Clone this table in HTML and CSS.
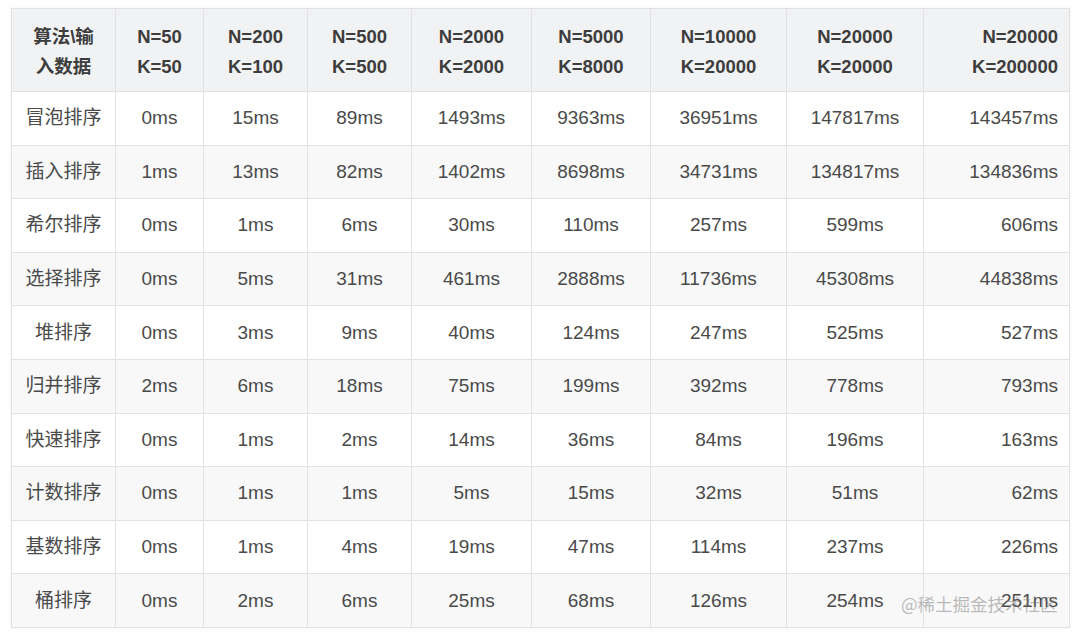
FILE: index.html
```html
<!DOCTYPE html>
<html lang="zh">
<head>
<meta charset="utf-8">
<link rel="stylesheet" href="styles.css">
</head>
<body>
<div class="wrap">
<table class="grid">
<colgroup>
<col class="c0"><col class="c1"><col class="c2"><col class="c3"><col class="c4"><col class="c5"><col class="c6"><col class="c7"><col class="c8">
</colgroup>
<thead>
<tr>
<th>算法\输<br>入数据</th>
<th>N=50<br>K=50</th>
<th>N=200<br>K=100</th>
<th>N=500<br>K=500</th>
<th>N=2000<br>K=2000</th>
<th>N=5000<br>K=8000</th>
<th>N=10000<br>K=20000</th>
<th>N=20000<br>K=20000</th>
<th class="r">N=20000<br>K=200000</th>
</tr>
</thead>
<tbody>
<tr><td>冒泡排序</td><td>0ms</td><td>15ms</td><td>89ms</td><td>1493ms</td><td>9363ms</td><td>36951ms</td><td>147817ms</td><td class="r">143457ms</td></tr>
<tr><td>插入排序</td><td>1ms</td><td>13ms</td><td>82ms</td><td>1402ms</td><td>8698ms</td><td>34731ms</td><td>134817ms</td><td class="r">134836ms</td></tr>
<tr><td>希尔排序</td><td>0ms</td><td>1ms</td><td>6ms</td><td>30ms</td><td>110ms</td><td>257ms</td><td>599ms</td><td class="r">606ms</td></tr>
<tr><td>选择排序</td><td>0ms</td><td>5ms</td><td>31ms</td><td>461ms</td><td>2888ms</td><td>11736ms</td><td>45308ms</td><td class="r">44838ms</td></tr>
<tr><td>堆排序</td><td>0ms</td><td>3ms</td><td>9ms</td><td>40ms</td><td>124ms</td><td>247ms</td><td>525ms</td><td class="r">527ms</td></tr>
<tr><td>归并排序</td><td>2ms</td><td>6ms</td><td>18ms</td><td>75ms</td><td>199ms</td><td>392ms</td><td>778ms</td><td class="r">793ms</td></tr>
<tr><td>快速排序</td><td>0ms</td><td>1ms</td><td>2ms</td><td>14ms</td><td>36ms</td><td>84ms</td><td>196ms</td><td class="r">163ms</td></tr>
<tr><td>计数排序</td><td>0ms</td><td>1ms</td><td>1ms</td><td>5ms</td><td>15ms</td><td>32ms</td><td>51ms</td><td class="r">62ms</td></tr>
<tr><td>基数排序</td><td>0ms</td><td>1ms</td><td>4ms</td><td>19ms</td><td>47ms</td><td>114ms</td><td>237ms</td><td class="r">226ms</td></tr>
<tr><td>桶排序</td><td>0ms</td><td>2ms</td><td>6ms</td><td>25ms</td><td>68ms</td><td>126ms</td><td>254ms</td><td class="r">251ms</td></tr>
</tbody>
</table>
<div class="mark">@稀土掘金技术社区</div>
</div>
</body>
</html>
```
FILE: styles.css
```css
html, body {
  margin: 0;
  padding: 0;
  background: #ffffff;
}
.wrap {
  position: relative;
  width: 1080px;
  height: 635px;
  padding: 8px 0 0 11px;
  box-sizing: border-box;
}
.grid {
  border-collapse: collapse;
  table-layout: fixed;
  width: 1058px;
  font-family: "Liberation Sans", "Noto Sans CJK SC", sans-serif;
  font-size: 19px;
  color: #4a4a4a;
  box-shadow: 0 0 3px rgba(0,0,0,0.06);
}
.c0 { width: 104px; }
.c1 { width: 88px; }
.c2 { width: 104px; }
.c3 { width: 104px; }
.c4 { width: 120px; }
.c5 { width: 119px; }
.c6 { width: 136px; }
.c7 { width: 137px; }
.c8 { width: 146px; }
.grid th, .grid td {
  border: 1px solid #e2e2e4;
  text-align: center;
  padding: 0 11px;
  vertical-align: middle;
  white-space: nowrap;
}
.grid th {
  background: #f1f2f4;
  font-weight: bold;
  font-size: 18.5px;
  line-height: 30px;
  color: #3d3d3d;
  height: 79px;
  padding-top: 3px;
}
.grid td {
  height: 52.6px;
  line-height: 20px;
}
.grid tbody tr:nth-child(even) td {
  background: #f8f8f9;
}
.grid .r {
  text-align: right;
}
.mark {
  position: absolute;
  left: 901px;
  top: 592px;
  font-family: "Noto Sans CJK SC", "Liberation Sans", sans-serif;
  font-size: 17.5px;
  line-height: 24px;
  color: rgba(120, 120, 120, 0.5);
}
```
